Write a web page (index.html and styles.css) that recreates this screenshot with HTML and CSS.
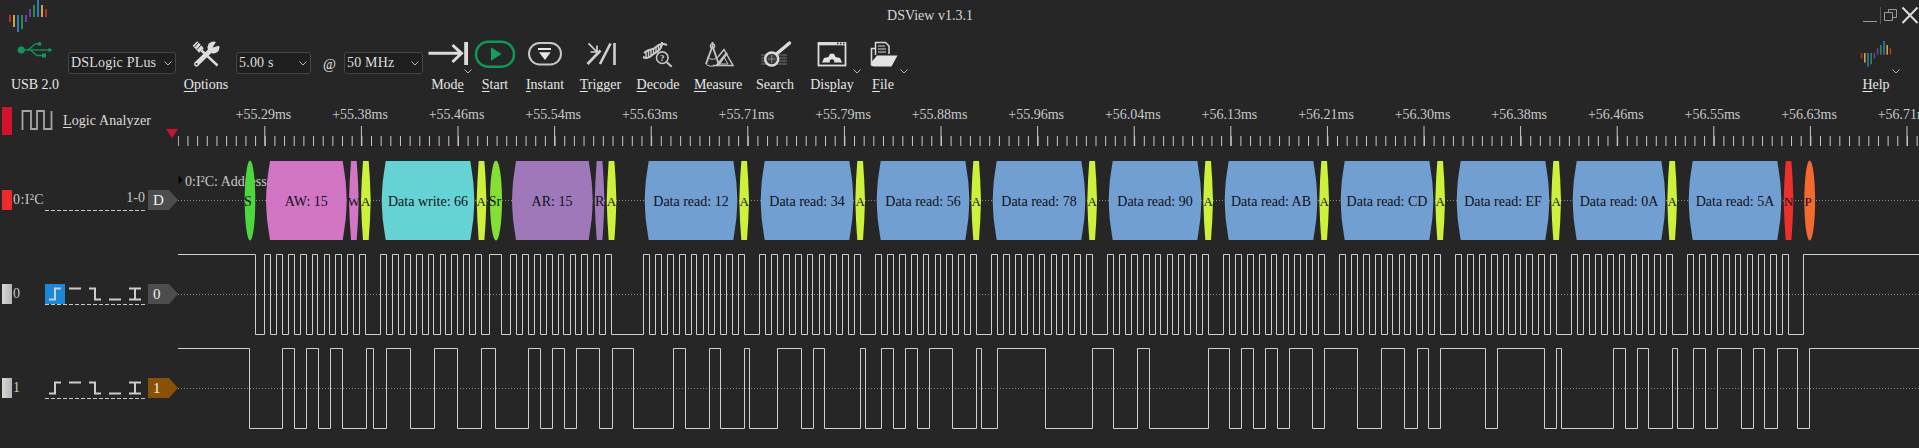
FILE: index.html
```html
<!DOCTYPE html>
<html lang="en">
<head>
<meta charset="utf-8">
<title>DSView v1.3.1</title>
<link rel="stylesheet" href="styles.css">
</head>
<body>
<svg class="defs" width="0" height="0">
  <symbol id="logo" viewBox="0 0 40 33">
    <rect x="1" y="15" width="2" height="7" fill="#b5302f"/>
    <rect x="5" y="15" width="2" height="12" fill="#cfa53f"/>
    <rect x="9" y="15" width="2" height="17" fill="#2a7cba"/>
    <rect x="13" y="15" width="2" height="14" fill="#2e8b4b"/>
    <rect x="17" y="15" width="2" height="7" fill="#6a3f9e"/>
    <rect x="21" y="9" width="2" height="8" fill="#6a3f9e"/>
    <rect x="25" y="5" width="2" height="12" fill="#2e8b4b"/>
    <rect x="29" y="0" width="2" height="17" fill="#2a7cba"/>
    <rect x="33" y="5" width="2" height="12" fill="#cfa53f"/>
    <rect x="37" y="9" width="2" height="8" fill="#b5302f"/>
  </symbol>
  <symbol id="chev" viewBox="0 0 8 5"><path d="M.5 .5L4 4L7.500 .5" fill="none" stroke="#b8b8b8"/></symbol>
  <symbol id="t-rise" viewBox="0 0 20 20"><path d="M4 15.500H10V4.500H16" class="trg"/></symbol>
  <symbol id="t-high" viewBox="0 0 20 20"><path d="M4 4.500H16" class="trg"/></symbol>
  <symbol id="t-fall" viewBox="0 0 20 20"><path d="M4 4.500H10V15.500H16" class="trg"/></symbol>
  <symbol id="t-low" viewBox="0 0 20 20"><path d="M4 15.500H16" class="trg"/></symbol>
  <symbol id="t-both" viewBox="0 0 20 20"><path d="M4 4.500H16M4 15.500H16M10 4.500V15.500" class="trg"/></symbol>
</svg>

<header class="titlebar">
  <svg class="logo"><use href="#logo"/></svg>
  <div class="title">DSView v1.3.1</div>
  <div class="winctl">
    <svg class="winicons" width="56" height="32" viewBox="0 0 56 32">
      <path d="M0 21.500H14" stroke="#9a9a9a" fill="none"/>
      <path d="M17.500 7V24" stroke="#555" fill="none"/>
      <path d="M21.500 12.500H29.500V20.500H21.500ZM25.500 12V9.500H33.500V17.500H30" stroke="#9a9a9a" fill="none"/>
      <path d="M39.500 7.500L54.500 23M54.500 7.500L39.500 23" stroke="#dcdcdc" stroke-width="2" fill="none"/>
    </svg>
  </div>
</header>

<nav class="toolbar">
  <div class="tool">
    <svg class="ic" width="40" height="32" viewBox="0 0 40 32">
      <g fill="#14965a" stroke="#14965a">
        <circle cx="6.200" cy="12" r="3.200"/>
        <path d="M6 12H36" fill="none" stroke-width="1.300"/>
        <path d="M37.500 12L33.500 9.800V14.200Z" stroke="none"/>
        <path d="M13 12L20.500 5.800H23M15.500 12L22 17.500H28" fill="none" stroke-width="1.300"/>
        <circle cx="24.500" cy="5.800" r="1.900" stroke="none"/>
        <rect x="27" y="15.500" width="4" height="4" stroke="none"/>
      </g>
    </svg>
    <span class="lbl">USB 2.0</span>
  </div>
  <div class="combo c1"><span>DSLogic PLus</span><svg class="cv"><use href="#chev"/></svg></div>
  <div class="tool">
    <svg class="ic" width="40" height="32" viewBox="0 0 40 32">
      <path d="M9 5.500L15.500 12.500" stroke="#dcdcdc" stroke-width="6.500" fill="none"/>
      <path d="M15.500 12.500L31.500 27.500" stroke="#dcdcdc" stroke-width="2.400" fill="none"/>
      <path d="M8.500 9L12.500 4.500M11 11.500L15 7" stroke="#262626" stroke-width="1" fill="none"/>
      <path d="M10.500 26L25.500 11.500" stroke="#dcdcdc" stroke-width="5" stroke-linecap="round" fill="none"/>
      <circle cx="27.500" cy="9.500" r="6" fill="#dcdcdc"/>
      <path d="M26.500 9.500L31 2.500L36 7Z" fill="#262626"/>
      <circle cx="10.500" cy="26" r="1.100" fill="#262626"/>
    </svg>
    <span class="lbl"><u>O</u>ptions</span>
  </div>
  <div class="combo c2"><span>5.00 s</span><svg class="cv"><use href="#chev"/></svg></div>
  <div class="at">@</div>
  <div class="combo c3"><span>50 MHz</span><svg class="cv"><use href="#chev"/></svg></div>
  <div class="tool">
    <svg class="ic" width="44" height="32" viewBox="0 0 44 32">
      <path d="M2.500 15.300H35.500M26.500 7L35.500 15.300L26.500 24" stroke="#dcdcdc" stroke-width="3" fill="none"/>
      <rect x="38.200" y="4" width="3.800" height="23" fill="#dcdcdc"/>
    </svg>
    <span class="lbl">Mod<u>e</u></span>
    <svg class="drop"><use href="#chev"/></svg>
  </div>
  <div class="tool">
    <svg class="ic" width="44" height="32" viewBox="0 0 44 32">
      <rect x="3" y="3.700" width="38" height="25" rx="12.500" fill="none" stroke="#109a58" stroke-width="2.400"/>
      <path d="M18 9.300L28.700 16L18 22.700Z" fill="#12a05c"/>
    </svg>
    <span class="lbl"><u>S</u>tart</span>
  </div>
  <div class="tool">
    <svg class="ic" width="40" height="32" viewBox="0 0 40 32">
      <rect x="4" y="5" width="32" height="21.500" rx="10.700" fill="none" stroke="#c8c8c8" stroke-width="2"/>
      <rect x="13" y="10" width="13" height="2" fill="#e6e6e6"/>
      <path d="M14 14.300H25.700L20 22Z" fill="#e6e6e6"/>
    </svg>
    <span class="lbl"><u>I</u>nstant</span>
  </div>
  <div class="tool">
    <svg class="ic" width="41" height="32" viewBox="0 0 41 32">
      <g stroke="#d0d0d0" stroke-width="2.600" fill="none">
        <path d="M7.500 26L20.500 12.500M20 26L30.500 5.500M34.500 5V27"/>
      </g>
      <path d="M8.500 5.300L16.500 13.500M10.500 14H17V7.500" stroke="#d0d0d0" stroke-width="1.700" fill="none"/>
    </svg>
    <span class="lbl"><u>T</u>rigger</span>
  </div>
  <div class="tool">
    <svg class="ic" width="40" height="32" viewBox="0 0 40 32">
      <g fill="none" stroke="#c8c8c8">
        <path d="M5 19C11 22 13 17 17 15C22 13 24 9 24 4" stroke-width="2"/>
        <path d="M6 15C12 10 14 13 18 9C21 6 24 5 29 7" stroke-width="2"/>
        <path d="M8 14V21M10.500 13V20M13 12V19M15.500 11V17M18 9V15M20.500 7V13M23 6V10" stroke-width="1.400"/>
        <circle cx="24.300" cy="19.700" r="5.800" fill="#262626" stroke-width="1.600"/>
        <path d="M28.500 24L33.700 28.700" stroke-width="2"/>
      </g>
      <text x="24.300" y="23" class="qm">?</text>
    </svg>
    <span class="lbl"><u>D</u>ecode</span>
  </div>
  <div class="tool">
    <svg class="ic" width="40" height="32" viewBox="0 0 40 32">
      <g fill="none" stroke="#c4c4c4">
        <path d="M15 27.500H35L26 11.500L20 19" stroke-width="1.500"/>
        <path d="M22 26H30L26 19Z" stroke-width="1"/>
        <path d="M19 27.500L29 15" stroke-width="2.600"/>
        <path d="M14.500 4V8M14.500 8L8 26M14.500 8L21 27" stroke-width="1.900"/>
        <circle cx="14.500" cy="8" r="2.200" stroke-width="1.200"/>
        <path d="M8 26.500Q12 29 16 28M9 19C12 22 17 22 20 19" stroke-width="1"/>
      </g>
    </svg>
    <span class="lbl"><u>M</u>easure</span>
  </div>
  <div class="tool">
    <svg class="ic" width="40" height="32" viewBox="0 0 40 32">
      <path d="M6 17H32M6 20H32M6 23H32M6 26H32" stroke="#5c5c5c" stroke-width="1.500" fill="none"/>
      <path d="M9 16V27M13 16V27M25 16V27M29 16V27" stroke="#4c4c4c" fill="none"/>
      <circle cx="16.700" cy="21" r="6.500" fill="#3a3a3a" stroke="#dcdcdc" stroke-width="2.400"/>
      <path d="M13 21H20.500M16.700 17V25" stroke="#888" fill="none"/>
      <path d="M22 15.500L34.500 5" stroke="#dcdcdc" stroke-width="3.400" stroke-linecap="round" fill="none"/>
    </svg>
    <span class="lbl">Sea<u>r</u>ch</span>
  </div>
  <div class="tool">
    <svg class="ic" width="40" height="32" viewBox="0 0 40 32">
      <rect x="6.500" y="5" width="27" height="22.500" fill="none" stroke="#dcdcdc" stroke-width="1.800"/>
      <rect x="6" y="4.300" width="28" height="3" fill="#dcdcdc"/>
      <path d="M25 5.500H26.500M28 5.500H29.500M31 5.500H32.500" stroke="#262626" fill="none" stroke-width="1.500"/>
      <path d="M10 24.500L12 20L16.500 19L18 15.800H22L23.500 19L28 20L30 24.500Z" fill="#e2e2e2"/>
      <circle cx="20" cy="23.500" r="2.300" fill="#262626"/>
    </svg>
    <span class="lbl">Dis<u>p</u>lay</span>
    <svg class="drop d-display"><use href="#chev"/></svg>
  </div>
  <div class="tool">
    <svg class="ic" width="36" height="32" viewBox="0 0 36 32">
      <path d="M6.500 27.500V10.500H10" fill="none" stroke="#d8d8d8" stroke-width="1.600"/>
      <path d="M10.500 17V4.500H20.500L24 8V16" fill="#262626" stroke="#d8d8d8" stroke-width="1.500"/>
      <path d="M13 8H20M13 11H21M13 14H21" stroke="#d8d8d8" fill="none"/>
      <path d="M9 28.500L6.500 28V24L12 17.500H32.500L26.500 28.500Z" fill="#e2e2e2"/>
    </svg>
    <span class="lbl"><u>F</u>ile</span>
    <svg class="drop d-file"><use href="#chev"/></svg>
  </div>
  <div class="spacer"></div>
  <div class="tool">
    <svg class="ic help"><use href="#logo"/></svg>
    <span class="lbl"><u>H</u>elp</span>
    <svg class="drop d-help"><use href="#chev"/></svg>
  </div>
</nav>

<main class="traces">
  <section class="row row-head">
    <div class="panel">
      <span class="bar bar-la"></span>
      <svg class="laicon" width="35" height="22" viewBox="0 0 35 22">
        <path d="M1.500 21V2H10V20H16V2H23V20H30.500V2" fill="none" stroke="#a6a6a6" stroke-width="1.800"/>
      </svg>
      <span class="la"><u>L</u>ogic Analyzer</span>
      <svg class="marker" width="12" height="9" viewBox="0 0 12 9"><path d="M0 0H12L6 9Z" fill="#c8142f"/></svg>
    </div>
    <svg class="canvas ruler" viewBox="178 98 1741 48">
      <line x1="177.800" y1="141" x2="1919" y2="141" class="minor"/>
      <line x1="264.300" y1="136" x2="1919" y2="136" class="major"/>
      <g class="rtext">
        <text x="263.400" y="119">+55.29ms</text>
        <text x="360" y="119">+55.38ms</text>
        <text x="456.600" y="119">+55.46ms</text>
        <text x="553.200" y="119">+55.54ms</text>
        <text x="649.800" y="119">+55.63ms</text>
        <text x="746.400" y="119">+55.71ms</text>
        <text x="843" y="119">+55.79ms</text>
        <text x="939.600" y="119">+55.88ms</text>
        <text x="1036.200" y="119">+55.96ms</text>
        <text x="1132.800" y="119">+56.04ms</text>
        <text x="1229.400" y="119">+56.13ms</text>
        <text x="1326" y="119">+56.21ms</text>
        <text x="1422.600" y="119">+56.30ms</text>
        <text x="1519.200" y="119">+56.38ms</text>
        <text x="1615.800" y="119">+56.46ms</text>
        <text x="1712.400" y="119">+56.55ms</text>
        <text x="1809" y="119">+56.63ms</text>
        <text x="1905.600" y="119">+56.71ms</text>
      </g>
    </svg>
  </section>

  <section class="row row-dec">
    <div class="panel">
      <span class="bar bar-dec"></span>
      <span class="name">0:I²C</span>
      <div class="trigs dec"><span>1-0</span></div>
      <span class="tag">D</span>
    </div>
    <svg class="canvas" viewBox="178 146 1741 104">
      <defs>
        <path id="b10" d="M2 15H7.700Q9.200 34 9.700 54.500Q9.200 75 7.700 94H2Q.5 75 0 54.500Q.5 34 2 15Z"/>
        <path id="b81" d="M4 15H76.700L78.200 25L79.700 36L80.300 45L80.700 54.500L80.300 64L79.700 73L78.200 84L76.700 94H4L2.500 84L1 73L.4 64L0 54.500L.4 45L1 36L2.500 25Z"/>
        <path id="b93" d="M4 15H88.600L90.100 25L91.600 36L92.200 45L92.600 54.500L92.200 64L91.600 73L90.100 84L88.600 94H4L2.500 84L1 73L.4 64L0 54.500L.4 45L1 36L2.500 25Z"/>
      </defs>
      <line x1="178" y1="200.500" x2="1919" y2="200.500" class="dots"/>
      <path d="M178.500 175.500L183 179.800L178.500 184Z" fill="#050505"/>
      <text x="185" y="186" class="addr">0:I²C: Address</text>
      <g transform="translate(0 146)">
        <ellipse cx="250" cy="54.500" rx="5.300" ry="40" class="c-s"/>
        <use href="#b81" x="266" class="c-pink"/>
        <use href="#b10" x="349" class="c-pink"/>
        <use href="#b10" x="361" class="c-ack"/>
        <use href="#b93" x="381.700" class="c-cyan"/>
        <use href="#b10" x="476.700" class="c-ack"/>
        <ellipse cx="496" cy="54.500" rx="6" ry="40" class="c-sr"/>
        <use href="#b81" x="512" class="c-purple"/>
        <use href="#b10" x="594.700" class="c-purple"/>
        <use href="#b10" x="606.700" class="c-ack"/>
        <use href="#b93" x="644.700" class="c-blue"/>
        <use href="#b10" x="739.300" class="c-ack"/>
        <use href="#b93" x="760.700" class="c-blue"/>
        <use href="#b10" x="855.300" class="c-ack"/>
        <use href="#b93" x="876.700" class="c-blue"/>
        <use href="#b10" x="971.300" class="c-ack"/>
        <use href="#b93" x="992.700" class="c-blue"/>
        <use href="#b10" x="1087.300" class="c-ack"/>
        <use href="#b93" x="1108.700" class="c-blue"/>
        <use href="#b10" x="1203.300" class="c-ack"/>
        <use href="#b93" x="1224.700" class="c-blue"/>
        <use href="#b10" x="1319.300" class="c-ack"/>
        <use href="#b93" x="1340.700" class="c-blue"/>
        <use href="#b10" x="1435.300" class="c-ack"/>
        <use href="#b93" x="1456.700" class="c-blue"/>
        <use href="#b10" x="1551.300" class="c-ack"/>
        <use href="#b93" x="1572.700" class="c-blue"/>
        <use href="#b10" x="1667.300" class="c-ack"/>
        <use href="#b93" x="1688.700" class="c-blue"/>
        <use href="#b10" x="1783.700" class="c-nak"/>
        <ellipse cx="1809.700" cy="54.500" rx="5.400" ry="40" class="c-p"/>
      </g>
      <g class="dtext">
        <text x="248" y="205.500">S</text>
        <text x="306.300" y="205.500">AW: 15</text>
        <text x="354" y="205.500" class="sm">W</text>
        <text x="365.800" y="205.500" class="sm">A</text>
        <text x="428" y="205.500">Data write: 66</text>
        <text x="481.300" y="205.500" class="sm">A</text>
        <text x="495" y="205.500">Sr</text>
        <text x="552" y="205.500">AR: 15</text>
        <text x="599.700" y="205.500">R</text>
        <text x="611.500" y="205.500" class="sm">A</text>
        <text x="691" y="205.500">Data read: 12</text>
        <text x="744.300" y="205.500" class="sm">A</text>
        <text x="807" y="205.500">Data read: 34</text>
        <text x="860.300" y="205.500" class="sm">A</text>
        <text x="923" y="205.500">Data read: 56</text>
        <text x="976.300" y="205.500" class="sm">A</text>
        <text x="1039" y="205.500">Data read: 78</text>
        <text x="1092.300" y="205.500" class="sm">A</text>
        <text x="1155" y="205.500">Data read: 90</text>
        <text x="1208.300" y="205.500" class="sm">A</text>
        <text x="1271" y="205.500">Data read: AB</text>
        <text x="1324.300" y="205.500" class="sm">A</text>
        <text x="1387" y="205.500">Data read: CD</text>
        <text x="1440.300" y="205.500" class="sm">A</text>
        <text x="1503" y="205.500">Data read: EF</text>
        <text x="1556.300" y="205.500" class="sm">A</text>
        <text x="1619" y="205.500">Data read: 0A</text>
        <text x="1672.300" y="205.500" class="sm">A</text>
        <text x="1735" y="205.500">Data read: 5A</text>
        <text x="1788.700" y="205.500" class="sm">N</text>
        <text x="1808" y="205.500" class="sm">P</text>
      </g>
    </svg>
  </section>

  <section class="row row-ch0">
    <div class="panel">
      <span class="bar bar-ch"></span>
      <span class="name ch">0</span>
      <div class="trigs">
        <svg class="trgcell on"><use href="#t-rise"/></svg>
        <svg class="trgcell"><use href="#t-high"/></svg>
        <svg class="trgcell"><use href="#t-fall"/></svg>
        <svg class="trgcell"><use href="#t-low"/></svg>
        <svg class="trgcell"><use href="#t-both"/></svg>
      </div>
      <span class="tag">0</span>
    </div>
    <svg class="canvas" viewBox="178 250 1741 88">
      <defs>
        <path id="byte" d="M0 80V0H6V80H12V0H18V80H24V0H30V80H36V0H42V80H48V0H53V80H60V0H65V80H71V0H77V80H83V0H89V80H95V0H101V80"/>
      </defs>
      <line x1="178" y1="294.500" x2="1919" y2="294.500" class="dots"/>
      <g class="wave">
        <path d="M178 254.500H255.500V334.500H264.500"/>
        <use href="#byte" x="264.500" y="254.500"/>
        <path d="M365.500 334.500H380.500"/>
        <use href="#byte" x="380.500" y="254.500"/>
        <path d="M481.500 334.500H489.500V254.500H501.500V334.500H510.500"/>
        <use href="#byte" x="510.500" y="254.500"/>
        <path d="M611.500 334.500H643.500"/>
        <use href="#byte" x="643.500" y="254.500"/>
        <path d="M744.500 334.500H759.500"/>
        <use href="#byte" x="759.500" y="254.500"/>
        <path d="M860.500 334.500H875.500"/>
        <use href="#byte" x="875.500" y="254.500"/>
        <path d="M976.500 334.500H991.500"/>
        <use href="#byte" x="991.500" y="254.500"/>
        <path d="M1092.500 334.500H1107.500"/>
        <use href="#byte" x="1107.500" y="254.500"/>
        <path d="M1208.500 334.500H1223.500"/>
        <use href="#byte" x="1223.500" y="254.500"/>
        <path d="M1324.500 334.500H1339.500"/>
        <use href="#byte" x="1339.500" y="254.500"/>
        <path d="M1440.500 334.500H1455.500"/>
        <use href="#byte" x="1455.500" y="254.500"/>
        <path d="M1556.500 334.500H1571.500"/>
        <use href="#byte" x="1571.500" y="254.500"/>
        <path d="M1672.500 334.500H1687.500"/>
        <use href="#byte" x="1687.500" y="254.500"/>
        <path d="M1788.500 334.500H1803.500V254.500H1919"/>
      </g>
    </svg>
  </section>

  <section class="row row-ch1">
    <div class="panel">
      <span class="bar bar-ch"></span>
      <span class="name ch">1</span>
      <div class="trigs">
        <svg class="trgcell"><use href="#t-rise"/></svg>
        <svg class="trgcell"><use href="#t-high"/></svg>
        <svg class="trgcell"><use href="#t-fall"/></svg>
        <svg class="trgcell"><use href="#t-low"/></svg>
        <svg class="trgcell"><use href="#t-both"/></svg>
      </div>
      <span class="tag tag-1">1</span>
    </div>
    <svg class="canvas" viewBox="178 338 1741 100">
      <line x1="178" y1="388.500" x2="1919" y2="388.500" class="dots"/>
      <g class="wave">
        <path d="M178 348.500H249.500V428.500H282.500V348.500H294.500V428.500H306.500V348.500H318.500V428.500H330.500V348.500H342.500V428.500H366.500V348.500H373.500V428.500H386.500V348.500H410.500V428.500H434.500V348.500H457.500V428.500H481.500V348.500H495.500V428.500H528.500V348.500H540.500V428.500H552.500V348.500H564.500V428.500H576.500V348.500H599.500V428.500H612.500V348.500H633.500V428.500H673.500V348.500H685.500V428.500H709.500V348.500H720.500V428.500H744.500V348.500H749.500V428.500H777.500V348.500H801.500V428.500H813.500V348.500H824.500V428.500H860.500V348.500H865.500V428.500H881.500V348.500H893.500V428.500H905.500V348.500H917.500V428.500H929.500V348.500H952.500V428.500H976.500V348.500H981.500V428.500H997.500V348.500H1045.500V428.500H1092.500V348.500H1113.500V428.500H1137.500V348.500H1149.500V428.500H1208.500V348.500H1229.500V428.500H1241.500V348.500H1253.500V428.500H1265.500V348.500H1277.500V428.500H1289.500V348.500H1312.500V428.500H1324.500V348.500H1357.500V428.500H1381.500V348.500H1404.500V428.500H1417.500V348.500H1428.500V428.500H1440.500V348.500H1485.500V428.500H1497.500V348.500H1544.500V428.500H1556.500V348.500H1561.500V428.500H1613.500V348.500H1625.500V428.500H1637.500V348.500H1648.500V428.500H1672.500V348.500H1677.500V428.500H1693.500V348.500H1705.500V428.500H1717.500V348.500H1741.500V428.500H1753.500V348.500H1764.500V428.500H1777.500V348.500H1797.500V428.500H1809.500V348.500H1919"/>
      </g>
    </svg>
  </section>
</main>
</body>
</html>
```

FILE: styles.css
```css
* { box-sizing: border-box; }
html, body { margin: 0; padding: 0; }
body {
  width: 1919px;
  height: 448px;
  overflow: hidden;
  background: #262626;
  color: #e6e6e6;
  font: 14px/16px "Liberation Serif", serif;
}
.defs { display: block; height: 0; width: 0; }
u { text-decoration-thickness: 1px; text-underline-offset: 2px; }

.titlebar { display: flex; height: 32px; align-items: flex-start; }
.logo { width: 40px; height: 33px; margin-left: 8px; flex: none; }
.title { flex: 1; text-align: center; padding-top: 8px; color: #d8d8d8; }
.winctl { width: 107px; display: flex; justify-content: flex-end; flex: none; }

.toolbar {
  display: grid;
  grid-template-columns: 54px 118px 52px 83px 25px 85px 45px 50px 50px 61px 54px 66px 48px 66px 36px 1fr 40px;
  height: 66px;
  padding: 6px 23px 0 8px;
  align-items: start;
}
.tool { position: relative; display: flex; flex-direction: column; align-items: center; }
.ic { display: block; flex: none; }
.ic.help { width: 32px; height: 26.4px; margin: 3px 0 2.6px; }
.lbl { margin-top: 7px; white-space: nowrap; }
.drop { position: absolute; width: 8px; height: 5px; right: -2px; top: 31px; }
.d-display { right: 4px; }
.d-file { right: -7px; }
.d-help { right: -4px; }

.combo {
  display: flex;
  align-items: center;
  justify-content: space-between;
  height: 22px;
  margin-top: 14px;
  padding: 0 3px 0 2px;
  background: #1f1f1f;
  border: 1px solid #454545;
  border-radius: 3px;
  letter-spacing: .2px;
  color: #dedede;
}
.c1 { width: 108px; margin-left: 6px; }
.c2 { width: 75px; margin-left: 4px; }
.c3 { width: 79px; margin-left: 4px; }
.cv { width: 8px; height: 5px; flex: none; }
.at { margin-top: 19px; margin-left: 8px; }

.traces { display: flex; flex-direction: column; }
.row { display: flex; flex: none; }
.row-head { height: 48px; }
.row-dec { height: 104px; }
.row-ch0 { height: 88px; }
.row-ch1 { height: 100px; }
.canvas { width: 1741px; height: 100%; display: block; flex: none; }

.panel { position: relative; width: 178px; flex: none; display: flex; align-items: center; padding-left: 2px; }
.row-dec .panel { padding-top: 4px; }
.row-head .panel { align-items: flex-start; padding-top: 9px; }
.bar { width: 10px; height: 20px; flex: none; }
.bar-la { height: 28px; background: #d3122e; }
.bar-dec { background: #ee2a2a; }
.bar-ch { background: linear-gradient(90deg, #d8d8d8, #b4b4b4); }
.laicon { margin: 2px 0 0 9px; flex: none; }
.la { margin: 6px 0 0 7px; color: #dcdcdc; letter-spacing: .1px; white-space: nowrap; }
.marker { position: absolute; left: 166px; top: 31px; }
.name { width: 33px; padding-left: 1px; color: #c8c8c8; flex: none; letter-spacing: .4px; }
.trigs {
  display: flex;
  width: 100px;
  height: 21px;
  margin-bottom: -1px;
  flex: none;
  background: repeating-linear-gradient(90deg, #c8c8c8 0 4px, transparent 4px 6px) left bottom / 100% 1px no-repeat;
}
.trigs.dec { justify-content: flex-end; color: #c8c8c8; }
.trgcell { width: 20px; height: 20px; display: block; flex: none; }
.trgcell.on { background: #1a88d8; }
.trg { fill: none; stroke: #cccccc; stroke-width: 2; }
.tag {
  width: 30px;
  height: 20px;
  margin-left: 3px;
  flex: none;
  padding: 2px 0 0 5px;
  background: #4d4d4d;
  color: #f0f0f0;
  font-size: 15px;
  clip-path: polygon(0 0, 21px 0, 30px 50%, 21px 100%, 0 100%);
}
.tag-1 { background: #8a5106; }

.minor { stroke: #c8c8c8; stroke-width: 10; stroke-dasharray: 1 8.66; }
.major { stroke: #c8c8c8; stroke-width: 20; stroke-dasharray: 1 95.6; }
.rtext text { fill: #c8c8c8; text-anchor: middle; font-size: 14px; }
.dots { stroke: #8a8a8a; stroke-width: 1; stroke-dasharray: 1 2; }
.addr { fill: #c8c8c8; font-size: 14px; }
.wave { fill: none; stroke: #cfcfcf; stroke-width: 1; }
.wave use { fill: none; }
.dtext text { fill: #101018; text-anchor: middle; font-size: 14px; }
.dtext .sm { font-size: 13px; }
.qm { fill: #dcdcdc; font-size: 9px; font-weight: bold; text-anchor: middle; }

.c-s { fill: #4dd63f; }
.c-sr { fill: #85e035; }
.c-pink { fill: #d175c4; }
.c-ack { fill: #cdf03c; }
.c-cyan { fill: #65d3d3; }
.c-purple { fill: #9e78b8; }
.c-blue { fill: #729fd2; }
.c-nak { fill: #ee2f2f; }
.c-p { fill: #f36a31; }
```
